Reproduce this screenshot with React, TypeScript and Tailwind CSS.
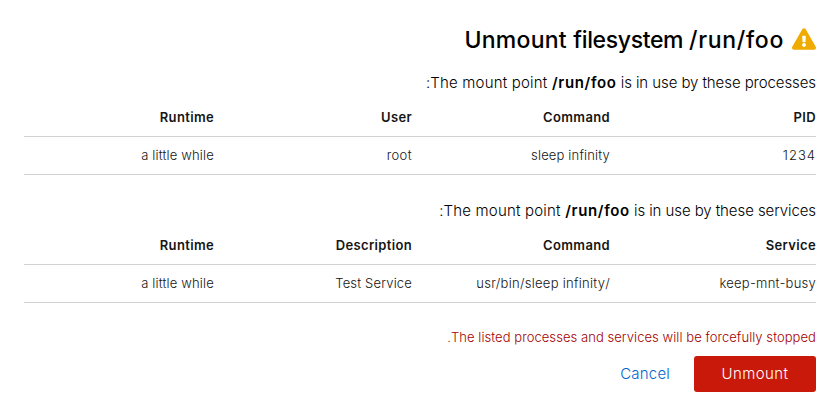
import React from "react";
import { FaExclamationTriangle } from "react-icons/fa";

type Cell = { text: string; tracking?: string };
type TableProps = { head: string[]; row: Cell[] };

function UsageTable({ head, row }: TableProps) {
  return (
    <table className="w-full table-fixed border-collapse text-start text-[13px] leading-[21px] text-[#151515]">
      <colgroup>
        <col className="w-[198px]" />
        <col className="w-[198px]" />
        <col className="w-[198px]" />
        <col className="w-[198px]" />
      </colgroup>
      <thead>
        <tr className="h-[38px] border-b border-[#d2d2d2]">
          {head.map((h) => (
            <th key={h} className="p-0 ps-2 pt-0.5 text-start align-middle font-semibold tracking-[0.35px] first:ps-0">
              <span>{h}</span>
            </th>
          ))}
        </tr>
      </thead>
      <tbody>
        <tr className="h-[38px] border-b border-[#d2d2d2]">
          {row.map((c) => (
            <td key={c.text} className="p-0 ps-2 pt-px align-middle font-light first:ps-0">
              <span className={c.tracking ?? "tracking-[0.17px]"}>{c.text}</span>
            </td>
          ))}
        </tr>
      </tbody>
    </table>
  );
}

function UsageIntro({ kind }: { kind: string }) {
  return (
    <p className="h-6 pt-px text-[15px] leading-6 font-light">
      <span className="tracking-[0.2px]">The mount point </span>
      <b className="font-semibold tracking-[0.65px]">/run/foo</b>
      <span className="tracking-[-0.08px]"> is in use by these {kind}</span>
      <span>:</span>
    </p>
  );
}

export default function App() {
  return (
    <div
      dir="rtl"
      className="flex h-[416px] w-[840px] flex-col bg-white px-6 pt-6 font-['Inter','Liberation_Sans',sans-serif] text-black"
    >
      <h1 className="flex h-[31px] items-center gap-2 text-[23px] leading-[31px] font-medium">
        <FaExclamationTriangle className="mb-px h-[22px] w-6 text-[#f0ab00]" />
        <span className="pt-0.5">
          <span className="tracking-[0.25px]">Unmount </span>
          <span className="tracking-[-0.36px]">filesystem </span>
          <span className="tracking-[0.7px]">/run/foo</span>
        </span>
      </h1>
      <div className="mt-[15px]">
        <UsageIntro kind="processes" />
      </div>
      <div className="mt-1 h-[76px]">
        <UsageTable
          head={["PID", "Command", "User", "Runtime"]}
          row={[
            { text: "1234", tracking: "tracking-[1px]" },
            { text: "sleep infinity" },
            { text: "root", tracking: "tracking-[0.4px]" },
            { text: "a little while" },
          ]}
        />
      </div>
      <div className="mt-6">
        <UsageIntro kind="services" />
      </div>
      <div className="mt-1 h-[76px]">
        <UsageTable
          head={["Service", "Command", "Description", "Runtime"]}
          row={[
            { text: "keep-mnt-busy", tracking: "tracking-[0.25px]" },
            { text: "/usr/bin/sleep infinity", tracking: "tracking-[0.28px]" },
            { text: "Test Service" },
            { text: "a little while" },
          ]}
        />
      </div>
      <p className="mt-6 h-[21px] pt-px text-[13px] leading-[21px] font-light tracking-[0.06px] text-[#a30000]">
        The listed processes and services will be forcefully stopped.
      </p>
      <div className="mt-[9px] flex">
        <button className="h-9 w-[122px] rounded-[3px] bg-[#c9190b] pt-px text-[15px] font-light tracking-[0.45px] text-white">
          Unmount
        </button>
        <button className="ms-6 h-9 pt-px text-[15px] font-light tracking-[0.2px] text-[#06c]">Cancel</button>
      </div>
    </div>
  );
}
